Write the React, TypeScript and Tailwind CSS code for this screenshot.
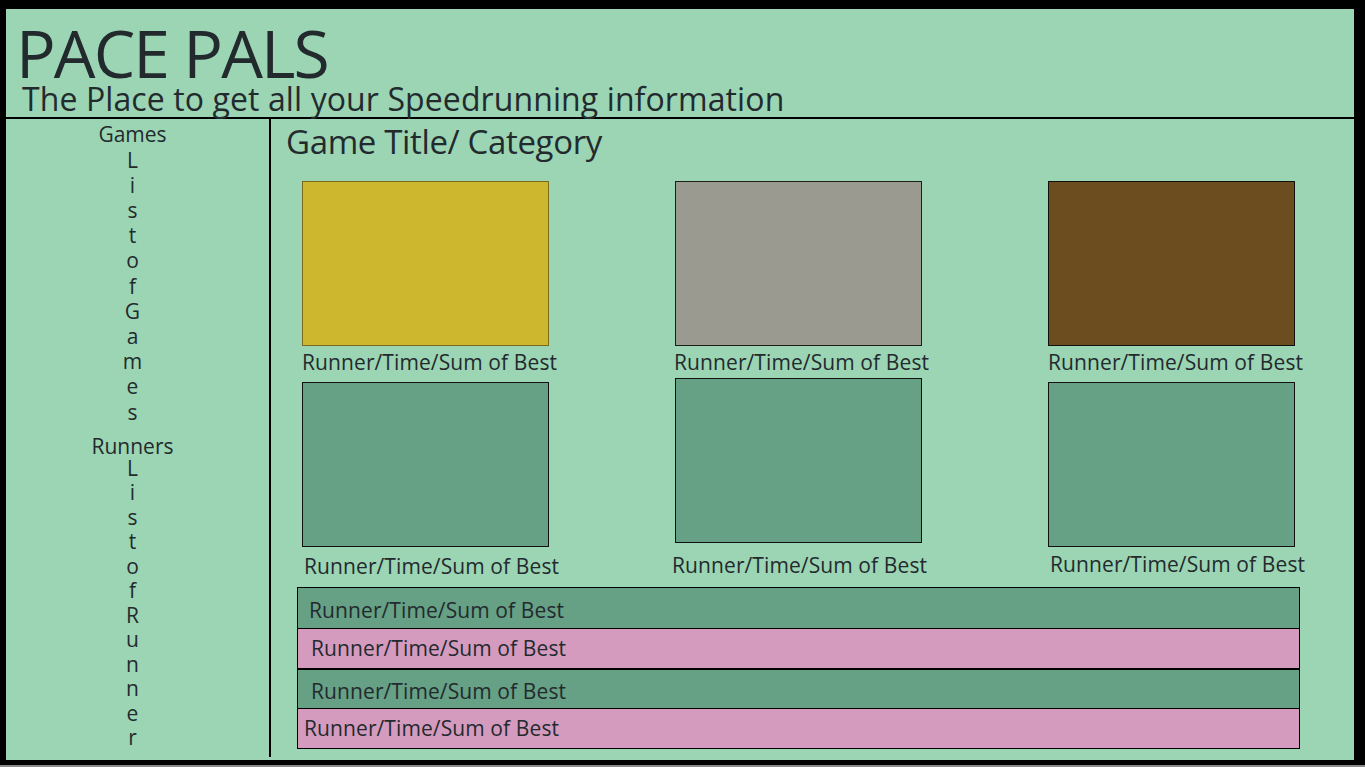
const gamesLetters = ['L', 'i', 's', 't', 'o', 'f', 'G', 'a', 'm', 'e', 's'];
const runnerLetters = ['L', 'i', 's', 't', 'o', 'f', 'R', 'u', 'n', 'n', 'e', 'r'];

type Card = {
  color: string;
  boxMt: string;
  labelMt: string;
  labelMl: string;
};

const cards: Card[] = [
  { color: 'bg-[#cdb72f] border-[#7a6b1c]', boxMt: 'mt-0', labelMt: 'mt-[4px]', labelMl: 'ml-0' },
  { color: 'bg-[#9a9a90] border-[#1d1d1a]', boxMt: 'mt-0', labelMt: 'mt-[4px]', labelMl: '-ml-[1px]' },
  { color: 'bg-[#6b4d20] border-[#111]', boxMt: 'mt-0', labelMt: 'mt-[4px]', labelMl: 'ml-0' },
  { color: 'bg-[#66a085] border-[#111]', boxMt: 'mt-[8px]', labelMt: 'mt-[7px]', labelMl: 'ml-[2px]' },
  { color: 'bg-[#66a085] border-[#111]', boxMt: 'mt-[4px]', labelMt: 'mt-[10px]', labelMl: '-ml-[3px]' },
  { color: 'bg-[#66a085] border-[#111]', boxMt: 'mt-[8px]', labelMt: 'mt-[5px]', labelMl: 'ml-[2px]' },
];

const bars = [
  { bg: 'bg-[#66a085]', pl: 'pl-[11px] pt-[5px]', border: '' },
  { bg: 'bg-[#d59bbf]', pl: 'pl-[13px]', border: 'border-t border-black' },
  { bg: 'bg-[#66a085]', pl: 'pl-[13px] pt-[5px]', border: 'border-t-2 border-black' },
  { bg: 'bg-[#d59bbf]', pl: 'pl-[6px] pt-[1px]', border: 'border-t border-black' },
];

function RunCard({ card }: { card: Card }) {
  return (
    <div className="flex flex-col">
      <div className={`${card.boxMt} w-[247px] h-[165px] border ${card.color}`} />
      <div className={`${card.labelMt} ${card.labelMl} text-[21px] leading-[24px] tracking-[0.1px] whitespace-nowrap`}>
        Runner/Time/Sum of Best
      </div>
    </div>
  );
}

export default function App() {
  return (
    <div className="w-[1365px] h-[767px] bg-black flex flex-col overflow-hidden font-['Open_Sans',sans-serif] text-[#232a2e]">
      <div className="ml-[6px] mt-[9px] w-[1348px] h-[751px] bg-[#9bd5b4] flex flex-col">
        <header className="h-[110px] border-b-2 border-black">
          <h1 className="pt-[10.5px] pl-[10px] text-[66px] leading-[64px] tracking-[-1.9px]">PACE PALS</h1>
          <p className="pl-[16px] text-[32px] leading-[30px] tracking-[0.1px] whitespace-nowrap">
            The Place to get all your Speedrunning information
          </p>
        </header>

        <div className="flex flex-1">
          <aside className="w-[265px] h-[638px] border-r-2 border-black pr-[10px] pt-[2.5px] flex flex-col items-center text-[21px]">
            <div className="leading-[25px]">Games</div>
            <div className="mt-[1px] flex flex-col items-center">
              {gamesLetters.map((l, i) => (
                <div key={i} className="leading-[25.2px]">{l}</div>
              ))}
            </div>
            <div className="mt-[9px] leading-[25px]">Runners</div>
            <div className="-mt-[3px] flex flex-col items-center">
              {runnerLetters.map((l, i) => (
                <div key={i} className="leading-[24.5px]">{l}</div>
              ))}
            </div>
          </aside>

          <main className="flex-1 pt-[5.7px]">
            <h2 className="pl-[15px] text-[33px] leading-[33px] tracking-[-0.35px] whitespace-nowrap">Game Title/ Category</h2>
            <div className="mt-[23.3px] pl-[31px] grid grid-cols-[247px_247px_247px] gap-x-[126px] items-start">
              {cards.map((c, i) => (
                <RunCard key={i} card={c} />
              ))}
            </div>
            <div className="mt-[9px] ml-[26px] w-[1003px] border border-black flex flex-col">
              {bars.map((b, i) => (
                <div key={i} className={`h-[40px] ${b.bg} ${b.border} ${b.pl} flex items-center text-[21px] tracking-[0.1px] whitespace-nowrap`}>
                  Runner/Time/Sum of Best
                </div>
              ))}
            </div>
          </main>
        </div>
      </div>
      <div className="mt-auto h-[2px] bg-[#8a8a8a]" />
    </div>
  );
}
